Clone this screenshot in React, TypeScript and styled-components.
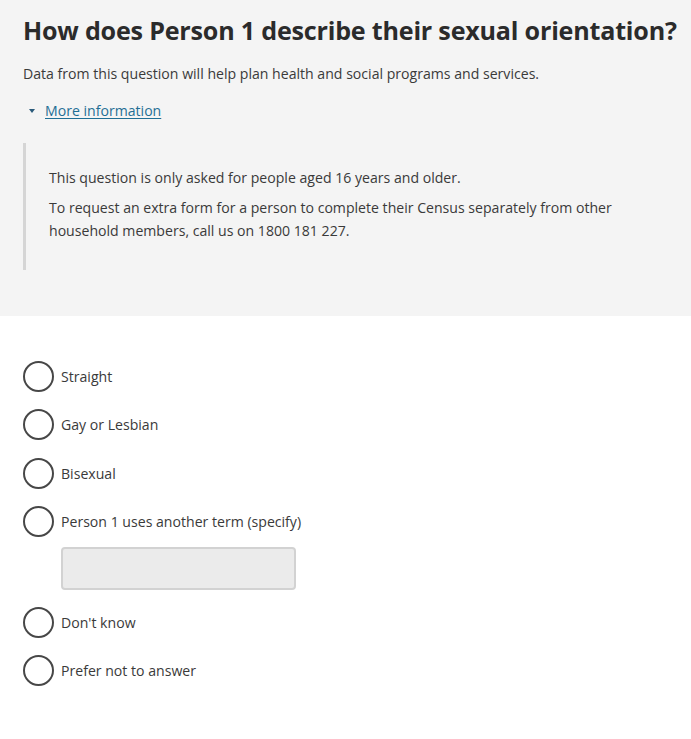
import * as React from "react";
import styled, { createGlobalStyle } from "styled-components";

const GlobalStyle = createGlobalStyle`
	html, body {
		margin: 0;
		padding: 0;
		background: #ffffff;
	}
	body {
		font-family: "Open Sans", "Liberation Sans", sans-serif;
		color: #333333;
	}
`;

const OPTIONS = [
	{ id: "straight", label: "Straight" },
	{ id: "gay", label: "Gay or Lesbian" },
	{ id: "bisexual", label: "Bisexual" },
	{ id: "other", label: "Person 1 uses another term (specify)", specify: true },
	{ id: "dontknow", label: "Don't know" },
	{ id: "prefer", label: "Prefer not to answer" }
];

export default function App() {
	return (
		<>
			<GlobalStyle />
			<QuestionHeader>
				<Title>How does Person 1 describe their sexual orientation?</Title>
				<Lead>Data from this question will help plan health and social programs and services.</Lead>
				<Disclosure>
					<Caret />
					<MoreLink href="#">More information</MoreLink>
				</Disclosure>
				<InfoPanel>
					<InfoText>This question is only asked for people aged 16 years and older.</InfoText>
					<InfoText>
						To request an extra form for a person to complete their Census separately from other
						household members, call us on 1800 181 227.
					</InfoText>
				</InfoPanel>
			</QuestionHeader>

			<OptionList>
				{OPTIONS.map(option => (
					<OptionGroup key={option.id}>
						<OptionRow>
							<RadioCircle />
							<OptionLabel>{option.label}</OptionLabel>
						</OptionRow>
						{option.specify && <SpecifyInput type="text" aria-label="Specify" />}
					</OptionGroup>
				))}
			</OptionList>
		</>
	);
}

const QuestionHeader = styled.section`
	background: #f4f4f4;
	padding: 13px 0 46px 23px;
`;

const Title = styled.h1`
	margin: 0;
	font-size: 25.1px;
	font-weight: 700;
	line-height: 35px;
	color: #2b2b2b;
	letter-spacing: -0.2px;
	white-space: nowrap;
`;

const Lead = styled.p`
	margin: 16px 0 0 0;
	font-size: 14.1px;
	line-height: 20px;
	color: #3a3a3a;
`;

const Disclosure = styled.div`
	display: flex;
	align-items: center;
	gap: 10px;
	margin-top: 17px;
	padding-left: 6px;
`;

const Caret = styled.span`
	width: 0;
	height: 0;
	border-left: 3.5px solid transparent;
	border-right: 3.5px solid transparent;
	border-top: 4px solid #2a5a7a;
`;

const MoreLink = styled.a`
	font-size: 14.1px;
	line-height: 20px;
	color: #1f6f95;
	text-decoration: underline;
	text-underline-offset: 2px;
`;

const InfoPanel = styled.div`
	margin-top: 22px;
	border-left: 3px solid #d5d5d5;
	padding: 23px 0 28px 23px;
	display: flex;
	flex-direction: column;
	gap: 7px;
`;

const InfoText = styled.p`
	margin: 0;
	font-size: 14.1px;
	line-height: 23px;
	color: #3a3a3a;
	max-width: 590px;
`;

const OptionList = styled.div`
	display: flex;
	flex-direction: column;
	gap: 16.5px;
	padding: 44px 0 40px 23px;
`;

const OptionGroup = styled.div`
	display: flex;
	flex-direction: column;
	gap: 9px;
`;

const OptionRow = styled.label`
	display: flex;
	align-items: center;
	gap: 7px;
	height: 32px;
	cursor: pointer;
`;

const RadioCircle = styled.span`
	box-sizing: border-box;
	width: 31px;
	height: 31px;
	border-radius: 50%;
	border: 2px solid #474747;
	background: #ffffff;
`;

const OptionLabel = styled.span`
	font-size: 14.1px;
	color: #3a3a3a;
`;

const SpecifyInput = styled.input`
	box-sizing: border-box;
	margin-left: 38px;
	width: 235px;
	height: 43px;
	background: #ebebeb;
	border: 2px solid #d2d2d2;
	border-radius: 4px;
	outline: none;
`;
